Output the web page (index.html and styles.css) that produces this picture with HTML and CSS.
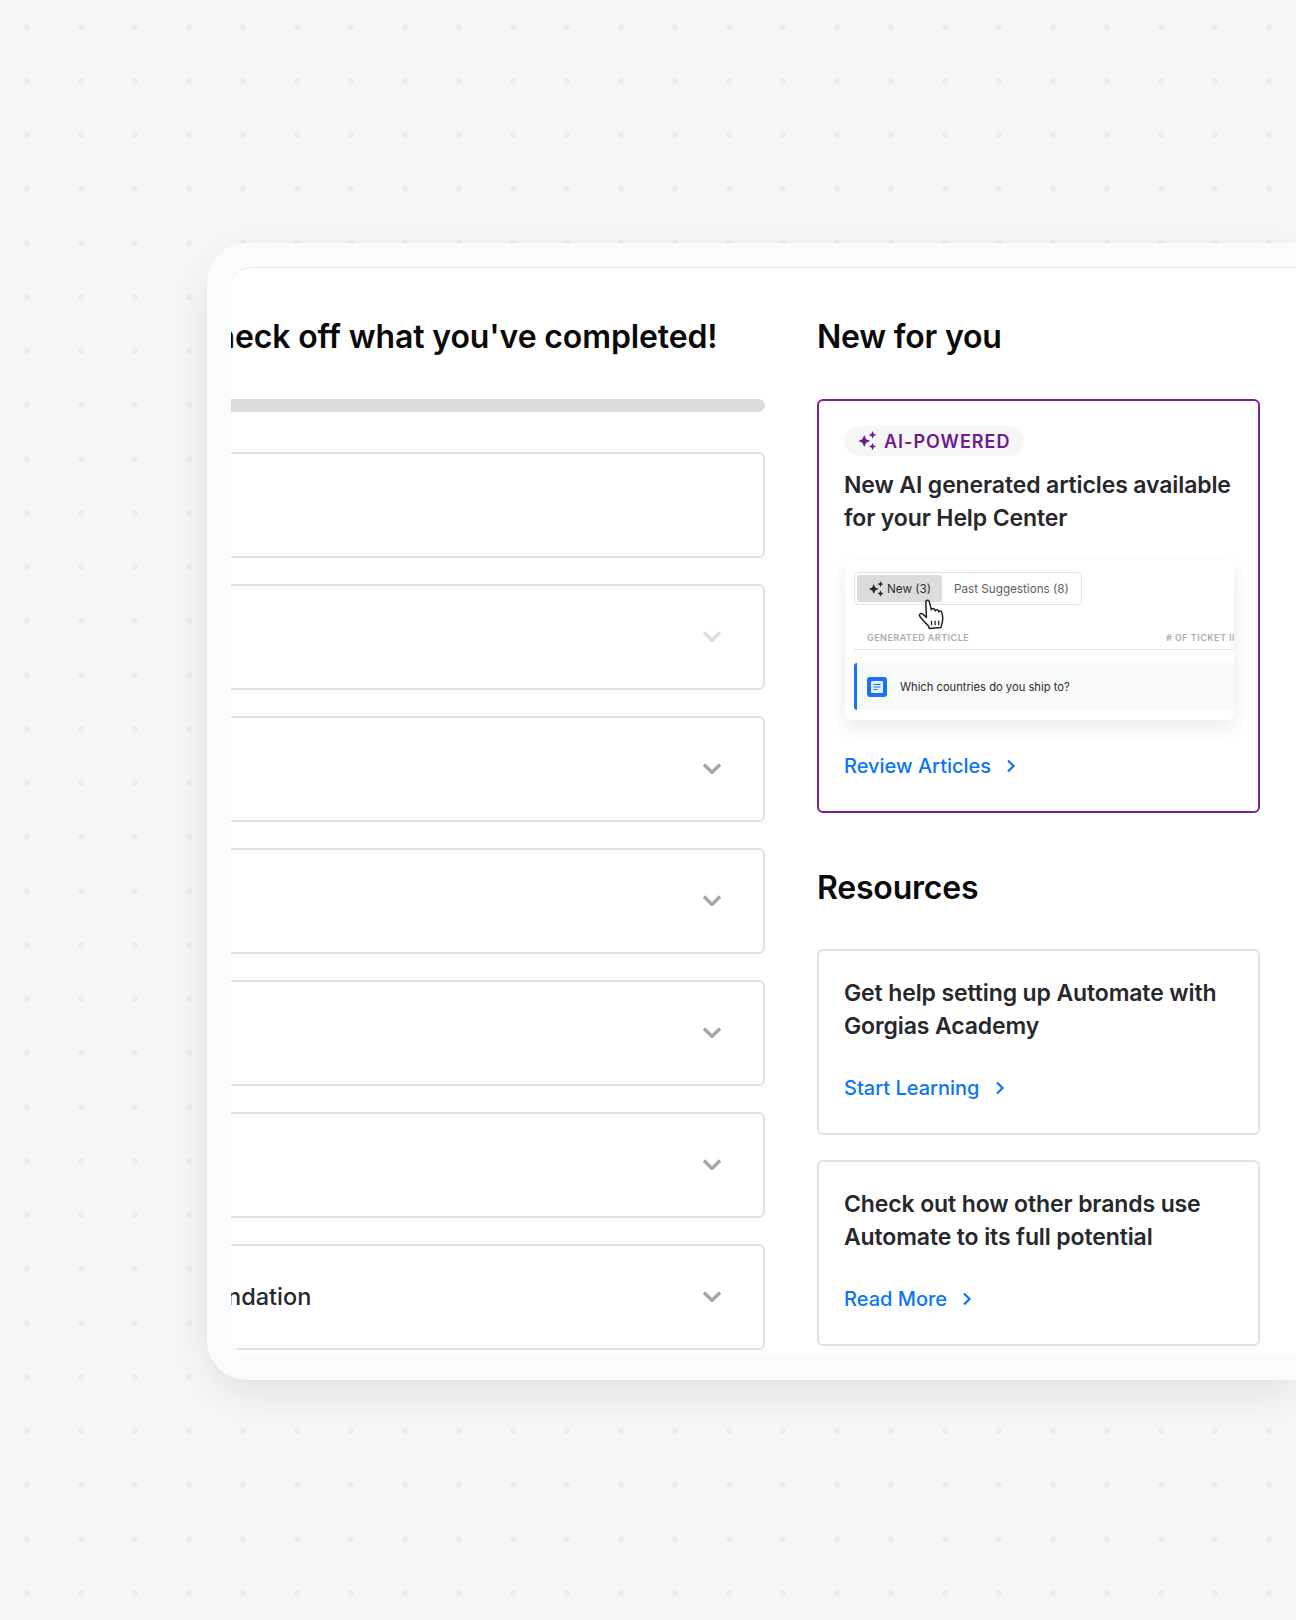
FILE: index.html
```html
<!DOCTYPE html>
<html lang="en">
<head>
<meta charset="utf-8">
<title>Automate</title>
<link rel="stylesheet" href="styles.css">
</head>
<body>
<svg class="dots" width="1296" height="1620" aria-hidden="true">
  <defs><pattern id="dot" x="0" y="0" width="54" height="54" patternUnits="userSpaceOnUse"><rect x="24" y="24" width="6" height="6" rx="2" fill="#ebecf1"/></pattern></defs>
  <rect width="1296" height="1620" fill="url(#dot)"/>
</svg>
<main class="frame">
  <div class="screen">
    <section class="left">
      <h2 class="heading left-heading">Check off what you've completed!</h2>
      <div class="progress"></div>
      <div class="task"></div>
      <div class="task"><svg class="chev chev-faint" width="18" height="11" viewBox="0 0 18 11"><path d="M1 1.500 9 9.500l8-8" /></svg></div>
      <div class="task"><svg class="chev" width="18" height="11" viewBox="0 0 18 11"><path d="M1 1.500 9 9.500l8-8" /></svg></div>
      <div class="task"><svg class="chev" width="18" height="11" viewBox="0 0 18 11"><path d="M1 1.500 9 9.500l8-8" /></svg></div>
      <div class="task"><svg class="chev" width="18" height="11" viewBox="0 0 18 11"><path d="M1 1.500 9 9.500l8-8" /></svg></div>
      <div class="task"><svg class="chev" width="18" height="11" viewBox="0 0 18 11"><path d="M1 1.500 9 9.500l8-8" /></svg></div>
      <div class="task"><span class="task-label">Recommendation</span><svg class="chev" width="18" height="11" viewBox="0 0 18 11"><path d="M1 1.500 9 9.500l8-8" /></svg></div>
    </section>
    <section class="right">
      <h2 class="heading">New for you</h2>
      <article class="card card-ai">
        <div class="pill">
          <svg width="22" height="22" viewBox="0 0 20 20" fill="#6f1a8e"><path d="M7.500 4.500 9.200 8.300 13 10 9.200 11.700 7.500 15.500 5.800 11.700 2 10 5.800 8.300Z"/><path d="M15 1 16 3.500 18.500 4.500 16 5.500 15 8 14 5.500 11.500 4.500 14 3.500Z"/><path d="M15 11.500 16 14 18.500 15 16 16 15 18.500 14 16 11.500 15 14 14Z"/></svg>
          <span>AI-POWERED</span>
        </div>
        <h3 class="card-title">New AI generated articles available for your Help Center</h3>
        <div class="mock">
          <div class="tabs">
            <div class="tab tab-on">
              <svg width="18" height="18" viewBox="0 0 20 20" fill="#2b2b2e"><path d="M7.500 4.500 9.200 8.300 13 10 9.200 11.700 7.500 15.500 5.800 11.700 2 10 5.800 8.300Z"/><path d="M15 1 16 3.500 18.500 4.500 16 5.500 15 8 14 5.500 11.500 4.500 14 3.500Z"/><path d="M15 11.500 16 14 18.500 15 16 16 15 18.500 14 16 11.500 15 14 14Z"/></svg>
              <span>New (3)</span>
            </div>
            <div class="tab">Past Suggestions (8)</div>
          </div>
          <div class="cols"><span>Generated article</span><span class="col-end"># of ticket ii</span></div>
          <div class="row">
            <span class="doc"><svg width="12" height="12" viewBox="0 0 12 12"><rect width="12" height="12" rx="1" fill="#e4efff"/><path d="M2.500 3.500h7M2.500 6h7M2.500 8.500h4" stroke="#1a73f5" stroke-width="1.200"/></svg></span>
            <span>Which countries do you ship to?</span>
          </div>
          <svg class="hand" width="28" height="31" viewBox="0 0 27 30"><path d="M7.500 2.500c.3-1.700 2.900-1.700 3.400 0l2 8c.1-1.500 2.500-1.900 3.100-.3l.6 1.300c.2-1.400 2.400-1.700 3-.2l.5 1.200c.4-1.200 2.300-1.200 2.800.2.900 2.900 1.300 6.300.6 9.400l-1.300 5.400-11.300 1-.8-2.500c-2.800-2.500-6.700-7-8.300-9.100-1.300-1.800.8-3.900 2.600-2.400l3.700 3.300L7.500 2.500Z" fill="#fff" stroke="#1d1d20" stroke-width="1.400" stroke-linejoin="round"/><path d="M13 21v4.500M16.500 21v4.500M20 21v4.500" stroke="#1d1d20" stroke-width="1.200"/></svg>
        </div>
        <a class="link" href="#">Review Articles<svg width="10" height="14" viewBox="0 0 10 14"><path d="M2 1.500 7.500 7 2 12.500"/></svg></a>
      </article>
      <h2 class="heading heading-res">Resources</h2>
      <article class="card card-res">
        <h3 class="card-title">Get help setting up Automate with Gorgias Academy</h3>
        <a class="link" href="#">Start Learning<svg width="10" height="14" viewBox="0 0 10 14"><path d="M2 1.500 7.500 7 2 12.500"/></svg></a>
      </article>
      <article class="card card-res card-res2">
        <h3 class="card-title">Check out how other brands use Automate to its full potential</h3>
        <a class="link" href="#">Read More<svg width="10" height="14" viewBox="0 0 10 14"><path d="M2 1.500 7.500 7 2 12.500"/></svg></a>
      </article>
    </section>
  </div>
</main>
</body>
</html>
```

FILE: styles.css
```css
* { box-sizing: border-box; }
html, body { margin: 0; padding: 0; }
body {
  position: relative;
  width: 1296px;
  height: 1620px;
  overflow: hidden;
  background: #f7f7f8;
  font-family: "Inter", "Liberation Sans", sans-serif;
  padding: 243px 0 0 207px;
}
.dots { position: absolute; left: 0; top: 0; }
.frame {
  position: relative;
  width: 1089px;
  height: 1137px;
  padding: 24px 0 25px 24px;
  border-radius: 40px 0 0 40px;
  background: rgba(250, 252, 252, .82);
  box-shadow: 0 14px 40px rgba(40, 40, 60, .1);
}
.screen {
  display: flex;
  height: 100%;
  overflow: hidden;
  background: #fff;
  border-top: 1px solid #e8e8ea;
  border-radius: 20px 0 0 20px;
}
.left {
  flex: none;
  width: 734px;
  margin-left: -200px;
  margin-right: 52px;
}
.heading {
  margin: 0;
  height: 48px;
  padding-top: 49px;
  padding-bottom: 0;
  box-sizing: content-box;
  font-size: 32px;
  line-height: 40px;
  font-weight: 600;
  letter-spacing: -.2px;
  color: #0a0a0c;
  white-space: nowrap;
}
.left-heading { padding-left: 161px; letter-spacing: -.13px; }
.progress {
  height: 13px;
  margin-top: 34px;
  border-radius: 0 7px 7px 0;
  background: #dcdcdc;
}
.task {
  display: flex;
  align-items: center;
  justify-content: flex-end;
  height: 106px;
  margin-top: 26px;
  padding-right: 42px;
  border: 2px solid #e2e2e4;
  border-radius: 6px;
  background: #fff;
}
.progress + .task { margin-top: 40px; }
.task-label {
  margin-right: auto;
  margin-bottom: 2px;
  padding-left: 82px;
  font-size: 23.500px;
  font-weight: 500;
  color: #27282b;
}
.chev { margin-bottom: 1px; fill: none; stroke: #aaa4ad; stroke-width: 3.400; }
.chev-faint { stroke: #dddcde; }
.right { flex: none; width: 443px; }
.card {
  display: block;
  width: 443px;
  padding: 0 25px;
  border: 2px solid #e2e2e4;
  border-radius: 6px;
  background: #fff;
}
.card-ai {
  height: 414px;
  margin-top: 34px;
  padding-top: 25px;
  border-color: #7b2392;
}
.pill {
  display: inline-flex;
  align-items: center;
  gap: 6px;
  height: 30px;
  padding: 0 13px 0 12px;
  border-radius: 15px;
  background: #f6f6f7;
  color: #6f1a8e;
  font-size: 18px;
  font-weight: 600;
  letter-spacing: 1px;
}
.card-title {
  margin: 0;
  font-size: 23px;
  line-height: 33px;
  font-weight: 600;
  letter-spacing: -.12px;
  color: #27282b;
}
.card-ai .card-title { margin-top: 13px; }
.mock {
  position: relative;
  width: 389px;
  height: 160px;
  margin: 25px 0 0 1px;
  padding-top: 12px;
  border-radius: 6px;
  background: #fff;
  box-shadow: 0 8px 20px rgba(40, 40, 60, .09);
  overflow: hidden;
}
.tabs {
  display: inline-flex;
  align-items: center;
  width: 228px;
  height: 33px;
  margin-left: 9px;
  padding: 0 2px;
  border: 1px solid #e2e2e4;
  border-radius: 3px;
  font-size: 11.700px;
  color: #5e5e63;
}
.tab {
  display: flex;
  align-items: center;
  height: 27px;
  padding: 0 12px;
  white-space: nowrap;
}
.tab-on {
  gap: 2px;
  width: 85px;
  flex: none;
  padding: 0 10px;
  border-radius: 3px;
  background: #dcdcdc;
  color: #2b2b2e;
}
.cols {
  display: flex;
  justify-content: space-between;
  width: 380px;
  height: 33px;
  margin: 12px 0 0 9px;
  padding: 15px 0 0 13px;
  border-bottom: 1px solid #e2e2e4;
  font-size: 9px;
  font-weight: 600;
  letter-spacing: .46px;
  text-transform: uppercase;
  color: #b0abb3;
  white-space: nowrap;
  overflow: hidden;
}
.col-end { margin-right: -1px; }
.row {
  display: flex;
  align-items: center;
  gap: 13px;
  width: 380px;
  height: 47px;
  margin: 13px 0 0 9px;
  padding-left: 10px;
  border-left: 3px solid #1a73f5;
  border-radius: 3px 0 0 3px;
  background: #f8f9f9;
  font-size: 11.200px;
  color: #2b2b2e;
}
.doc {
  display: flex;
  align-items: center;
  justify-content: center;
  width: 20px;
  height: 20px;
  border-radius: 3px;
  background: #1a73f5;
}
.hand { position: absolute; left: 73px; top: 39px; }
.link {
  display: inline-flex;
  align-items: center;
  gap: 15px;
  font-size: 20px;
  line-height: 28px;
  font-weight: 500;
  color: #0b75f5;
  text-decoration: none;
}
.link svg { fill: none; stroke: #0b75f5; stroke-width: 2.200; }
.card-ai .link { margin-top: 32px; }
.heading-res { padding-top: 55px; height: 48px; }
.card-res {
  height: 186px;
  margin-top: 33px;
  padding-top: 26px;
}
.card-res2 { margin-top: 25px; }
.card-res .link { margin-top: 31px; }
```
